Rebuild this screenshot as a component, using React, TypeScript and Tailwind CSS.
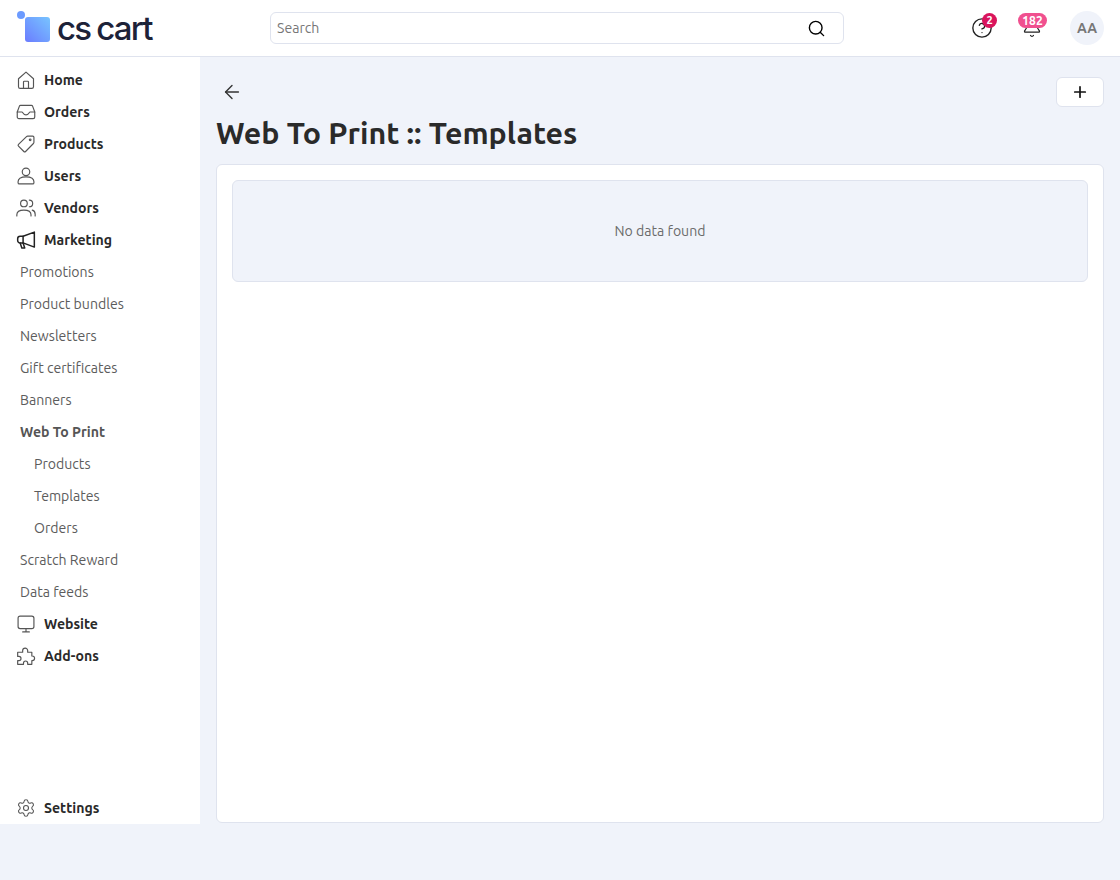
import type { ReactNode } from 'react'
import { Settings, Search, Bell, CircleHelp, ArrowLeft, Plus } from 'lucide-react'

const font = "font-['Ubuntu','Noto_Sans',sans-serif]"

function Svg({ children, dark }: { children: ReactNode; dark?: boolean }) {
  return (
    <svg
      viewBox="0 0 24 24"
      fill="none"
      stroke="currentColor"
      strokeWidth={dark ? 1.8 : 1.4}
      strokeLinecap="round"
      strokeLinejoin="round"
      className={`h-5 w-5 shrink-0 ${dark ? 'text-[#222]' : 'text-[#555]'}`}
    >
      {children}
    </svg>
  )
}

const HomeIcon = () => (
  <Svg>
    <path d="M3 10.5 12 2.5l9 8V20a2 2 0 0 1-2 2H5a2 2 0 0 1-2-2z" />
    <path d="M9 22v-7.5a1 1 0 0 1 1-1h4a1 1 0 0 1 1 1V22" />
  </Svg>
)
const InboxIcon = () => (
  <Svg>
    <path d="M5.5 4h13a1.5 1.5 0 0 1 1.4 1L22.5 12v6a2 2 0 0 1-2 2h-17a2 2 0 0 1-2-2v-6L4.100 5a1.500 1.500 0 0 1 1.400-1z" />
    <path d="M1.500 12H7c1.500 0 1.500 3.500 5 3.500s3.500-3.500 5-3.500h5.500" />
  </Svg>
)
const TagIcon = () => (
  <Svg>
    <path d="M14 2.500h6A1.500 1.500 0 0 1 21.500 4v6a2 2 0 0 1-.6 1.400L11.500 21a1.500 1.500 0 0 1-2.100 0L3 14.600a1.500 1.500 0 0 1 0-2.100L12.600 3.100A2 2 0 0 1 14 2.500z" />
    <circle cx="17" cy="7" r="1" />
  </Svg>
)
const UserIcon = () => (
  <Svg>
    <circle cx="12" cy="7" r="4.500" />
    <path d="M2.500 19c0-4 4-6 9.500-6s9.500 2 9.500 6v1a1.500 1.500 0 0 1-1.500 1.500H4A1.500 1.500 0 0 1 2.500 20z" />
  </Svg>
)
const UsersIcon = () => (
  <Svg>
    <circle cx="9.500" cy="6.500" r="4" />
    <path d="M1 21.500V20c0-3.500 3.500-5.500 8.500-5.500S18 16.500 18 20v1.500" />
    <path d="M16 2.500a4 4 0 0 1 0 8" />
    <path d="M19.500 14.500c2.300.6 3.500 2.500 3.500 5v2" />
  </Svg>
)
const MegaphoneIcon = () => (
  <Svg dark>
    <path d="M22 2.500 8.500 7.500H5a3 3 0 0 0-3 3v2a3 3 0 0 0 3 3h3.500l13.500 5z" />
    <path d="M8.500 7.500v8" />
    <path d="m5 15.500 2 6h3.500l-2-6" />
  </Svg>
)
const MonitorIcon = () => (
  <Svg>
    <rect x="2.500" y="2.500" width="19" height="15" rx="2.500" />
    <path d="M12 17.500v4M8 21.500h8" />
  </Svg>
)
const PuzzleIcon = () => (
  <Svg>
    <path d="M2 7.500h6V5.500a3 3 0 0 1 6 0v2h5V12h.5a2.800 2.800 0 0 1 0 5.600H19V22h-5v-1.500a2.500 2.500 0 0 0-5 0V22H2v-4.500h1.500a2.500 2.500 0 0 0 0-5H2z" />
  </Svg>
)
const GearIcon = () => <Settings className="h-5 w-5 shrink-0 text-[#555]" strokeWidth={1.3} />

const topItems = [
  { text: 'Home', icon: <HomeIcon /> },
  { text: 'Orders', icon: <InboxIcon /> },
  { text: 'Products', icon: <TagIcon /> },
  { text: 'Users', icon: <UserIcon /> },
  { text: 'Vendors', icon: <UsersIcon /> },
  { text: 'Marketing', icon: <MegaphoneIcon /> },
]

const subItems = [
  { text: 'Promotions' },
  { text: 'Product bundles' },
  { text: 'Newsletters' },
  { text: 'Gift certificates' },
  { text: 'Banners' },
  { text: 'Web To Print', active: true },
  { text: 'Products', nested: true },
  { text: 'Templates', nested: true },
  { text: 'Orders', nested: true },
  { text: 'Scratch Reward' },
  { text: 'Data feeds' },
]

function MainLink({ text, icon }: { text: string; icon: ReactNode }) {
  return (
    <a className="flex h-8 items-center pl-4">
      {icon}
      <span className="ml-2 text-[14.1px] font-bold leading-[21px] text-[#2a2a2a]">{text}</span>
    </a>
  )
}

export default function App() {
  return (
    <div className={`min-h-[880px] bg-[#f0f3fa] ${font}`}>
      <header className="flex h-[57px] items-center border-b border-[#dfe3ee] bg-white">
        {/* Logo */}
        <div className="flex w-[270px] shrink-0 items-center pl-[17px]">
          <div className="relative mt-[3px] h-[25px] w-[33px]">
            <div className="absolute left-0 top-[-6px] h-2 w-2 rounded-full bg-[#6c9bff]" />
            <div className="absolute bottom-0 right-0 h-[25px] w-[25px] rounded-[3px] bg-gradient-to-tr from-[#6b7bff] to-[#78c4ff]" />
          </div>
          <span className="ml-[7px] font-['Inter',sans-serif] text-[33px] font-medium leading-none tracking-[-1.8px] text-[#1d2238] [word-spacing:-1px]">cs cart</span>
        </div>
        <div className="flex h-8 w-[574px] items-center justify-between rounded-md border border-[#dfe3ee] pl-1.5 pr-[17px]">
          <span className="text-[14.1px] leading-[21px] text-[#777]">Search</span>
          <Search className="h-[19px] w-[19px] text-black" strokeWidth={1.75} />
        </div>
        <div className="ml-auto flex items-center pr-4">
          <div className="relative mr-[29px]">
            <CircleHelp className="h-[22px] w-[22px] text-[#222]" strokeWidth={1.5} />
            <span className="absolute left-[11px] top-[-4px] flex h-[15px] w-[15px] items-center justify-center rounded-full bg-[#d9145c] text-[11px] font-bold text-white">2</span>
          </div>
          <div className="relative mr-[28px]">
            <Bell className="h-5 w-5 text-[#222]" strokeWidth={1.5} />
            <span className="absolute left-[-4px] top-[-5px] flex h-[15px] w-[29px] items-center justify-center rounded-full bg-[#f0508f] text-xs font-bold text-white">182</span>
          </div>
          <div className="flex h-[34px] w-[34px] items-center justify-center rounded-full bg-[#f0f3fa] text-sm font-bold text-[#777]">AA</div>
        </div>
      </header>

      <div className="flex">
        <aside className="flex h-[767px] w-[200px] shrink-0 flex-col bg-white pt-[7px]">
          {topItems.map((item) => (
            <MainLink key={item.text} text={item.text} icon={item.icon} />
          ))}
          {subItems.map((item, i) => (
            <a
              key={i}
              className={`flex h-8 items-center text-[14.1px] leading-[21px] ${item.nested ? 'pl-[34px]' : 'pl-5'} ${item.active ? 'font-bold text-[#555]' : 'text-[#5c5c5c]'}`}
            >
              {item.text}
            </a>
          ))}
          <MainLink text="Website" icon={<MonitorIcon />} />
          <MainLink text="Add-ons" icon={<PuzzleIcon />} />
          <div className="mt-auto">
            <MainLink text="Settings" icon={<GearIcon />} />
          </div>
        </aside>

        <main className="flex h-[766px] min-w-0 flex-1 flex-col px-4 pt-5">
          <div className="flex h-[30px] shrink-0 items-center justify-between">
            <ArrowLeft className="ml-[5px] h-[22px] w-[22px] text-[#333]" strokeWidth={1.5} />
            <button className="flex h-[30px] w-12 items-center justify-center rounded-md border border-[#dfe3ee] bg-white">
              <Plus className="h-[18px] w-[18px] text-[#111]" strokeWidth={2.25} />
            </button>
          </div>
          <h1 className="mb-[11px] mt-[6px] text-[30.4px] font-bold leading-10 text-[#2a2a2a]">Web To Print :: Templates</h1>
          <div className="flex-1 rounded-md border border-[#dfe3ee] bg-white p-[15px]">
            <div className="flex h-[102px] items-center justify-center rounded-md border border-[#dfe3ee] bg-[#f0f3fa] text-[14.1px] leading-[21px] text-[#6b6b6b]">
              No data found
            </div>
          </div>
        </main>
      </div>
    </div>
  )
}
